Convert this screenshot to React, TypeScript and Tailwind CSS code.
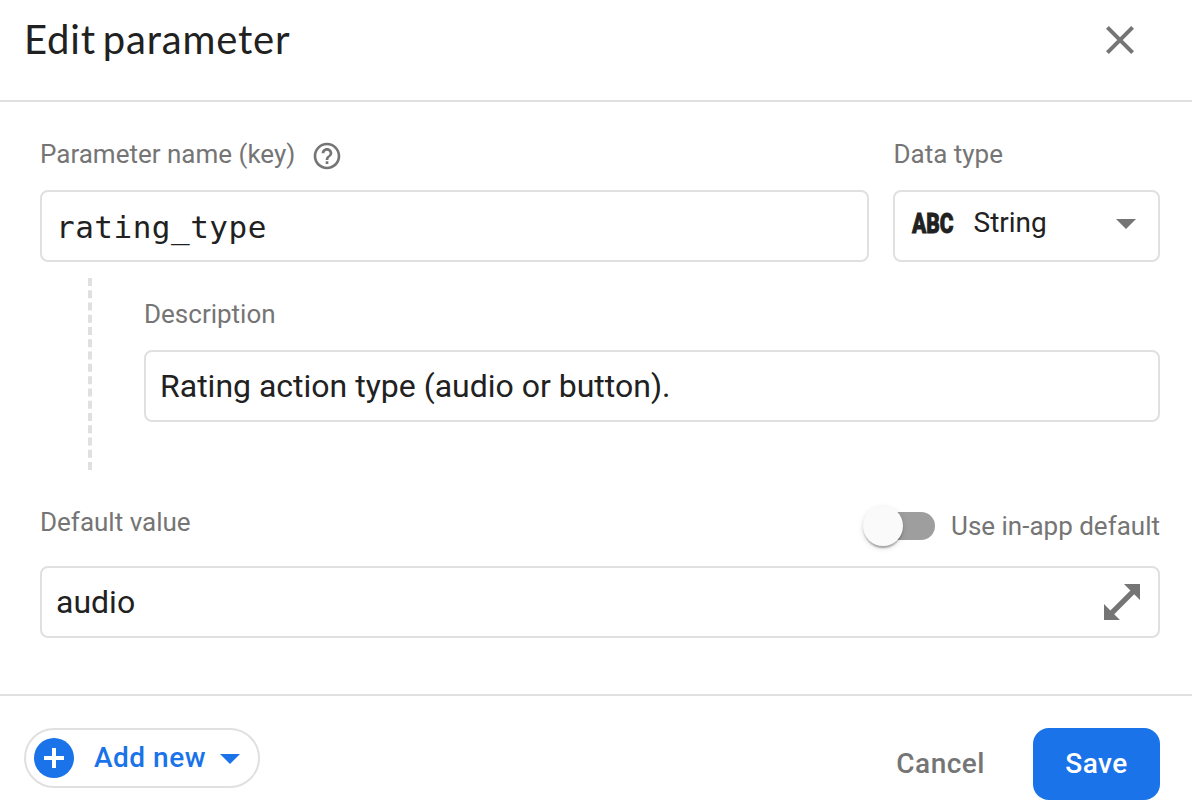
import type { ReactNode } from "react";

const labelText = "text-[26px] leading-8 text-[#757575] whitespace-nowrap";
const fieldBox =
  "flex h-[72px] items-center rounded-lg border-2 border-[#e0e0e0] bg-white";

function Label({ children, className = "" }: { children: ReactNode; className?: string }) {
  return <span className={`${labelText} ${className}`}>{children}</span>;
}

function CloseIcon() {
  return (
    <svg className="h-12 w-12" viewBox="0 0 48 48" fill="none" stroke="#757575" strokeWidth="4">
      <path d="M11.4 11.4 L36.6 36.6 M36.6 11.4 L11.4 36.6" />
    </svg>
  );
}

function HelpIcon() {
  return (
    <svg className="h-8 w-8" viewBox="0 0 24 24" fill="#757575">
      <path d="M11 18h2v-2h-2v2zm1-16C6.48 2 2 6.48 2 12s4.48 10 10 10 10-4.48 10-10S17.52 2 12 2zm0 18c-4.41 0-8-3.59-8-8s3.59-8 8-8 8 3.59 8 8-3.59 8-8 8zm0-14c-2.21 0-4 1.79-4 4h2c0-1.1.9-2 2-2s2 .9 2 2c0 2-3 1.75-3 5h2c0-2.25 3-2.5 3-5 0-2.21-1.79-4-4-4z" />
    </svg>
  );
}

function ExpandIcon() {
  return (
    <svg className="h-9 w-9" viewBox="0 0 36 36" fill="#757575">
      <path d="M20 0H36V16L30.2 10.2L10.2 30.2L16 36H0V20L6.4 26.4L26.4 6.4Z" />
    </svg>
  );
}

function CaretDown({ className }: { className: string }) {
  return (
    <svg className={`h-[10px] w-5 ${className}`} viewBox="0 0 20 10" fill="currentColor">
      <path d="M0 0H20L10 10Z" />
    </svg>
  );
}

function Header() {
  return (
    <header className="flex h-[102px] items-start justify-between border-b-2 border-[#e0e0e0] pt-4 pr-12 pl-6">
      <h1 className="-mt-px font-[Lato,sans-serif] text-[40px] leading-12 tracking-[0.8px] whitespace-nowrap [word-spacing:-4px]">
        Edit parameter
      </h1>
      <button type="button" aria-label="Close">
        <CloseIcon />
      </button>
    </header>
  );
}

function Toggle() {
  return (
    <span className="flex h-7 w-[72px] items-center pl-1">
      <span className="flex h-7 w-full items-center rounded-full bg-[#9e9e9e]">
        <span className="-ml-1 h-10 w-10 shrink-0 rounded-full bg-[#fafafa] shadow-[0_4px_2px_-2px_rgba(0,0,0,0.2),0_2px_2px_rgba(0,0,0,0.14),0_2px_6px_rgba(0,0,0,0.12)]" />
      </span>
    </span>
  );
}

function Footer() {
  return (
    <footer className="flex h-[116px] items-start justify-between border-t-2 border-[#e0e0e0] pt-8 pr-8 pl-6 font-medium">
      <button
        type="button"
        className="flex h-[60px] w-[236px] items-center rounded-full border-2 border-[#e0e0e0] pl-2 text-[#1a73e8]"
      >
        <span className="flex h-10 w-10 items-center justify-center rounded-full bg-[#1a73e8]">
          <svg className="h-5 w-5" viewBox="0 0 20 20" fill="#fff">
            <path d="M8 0h4v8h8v4h-8v8H8v-8H0V8h8z" />
          </svg>
        </span>
        <span className="ml-5 w-[126px] text-left text-[28px] leading-8 tracking-[0.5px] whitespace-nowrap">Add new</span>
        <CaretDown className="mt-0.5" />
      </button>
      <div className="flex items-center">
        <button type="button" className="mr-12 text-[28px] leading-8 tracking-[0.5px] text-[#757575]">
          Cancel
        </button>
        <button
          type="button"
          className="h-[72px] w-[127px] rounded-2xl bg-[#1a73e8] text-[28px] leading-8 tracking-[0.5px] text-white"
        >
          Save
        </button>
      </div>
    </footer>
  );
}

export default function App() {
  return (
    <div className="flex h-[810px] w-[1192px] flex-col overflow-hidden bg-white font-[Roboto,sans-serif] text-[#212121]">
      <Header />
      <main className="flex h-[592px] flex-col pr-8 pl-10">
        <div className="flex gap-6 pt-9">
          <div className="w-[829px]">
            <div className="flex h-[52px] items-start">
              <Label>Parameter name (key)</Label>
              <span className="mt-0.5 ml-4">
                <HelpIcon />
              </span>
            </div>
            <div className={`${fieldBox} pt-0.5 pl-[14px] font-['DejaVu_Sans_Mono',monospace] text-[31px] tracking-[0.5px]`}>
              rating_type
            </div>
          </div>
          <div className="w-[267px]">
            <div className="flex h-[52px] items-start">
              <Label className="pl-[0.5px]">Data type</Label>
            </div>
            <div className={`${fieldBox} pr-[22px] pl-[17px] pb-1.5`}>
              <span className="w-[61.5px] pt-0.5">
                <span className="inline-block origin-left scale-x-75 text-[28px] leading-8 font-black [-webkit-text-stroke:0.8px_#212121]">
                  ABC
                </span>
              </span>
              <span className="grow text-[28px] leading-8">String</span>
              <CaretDown className="mt-0.5 text-[#757575]" />
            </div>
          </div>
        </div>

        <div className="mt-4 ml-12 h-48 border-l-4 border-dashed border-[#e0e0e0] pt-5 pl-[52px]">
          <div className="flex h-[52px] items-start">
            <Label>Description</Label>
          </div>
          <div className={`${fieldBox} pl-[14px] text-[32px]`}>Rating action type (audio or button).</div>
        </div>

        <div className="flex h-24 items-start justify-between pt-9">
          <Label>Default value</Label>
          <label className="mt-1 flex items-center gap-4">
            <Toggle />
            <Label>Use in-app default</Label>
          </label>
        </div>
        <div className={`${fieldBox} justify-between pr-[18px] pl-[14px] text-[32px]`}>
          audio
          <ExpandIcon />
        </div>
      </main>
      <Footer />
    </div>
  );
}
